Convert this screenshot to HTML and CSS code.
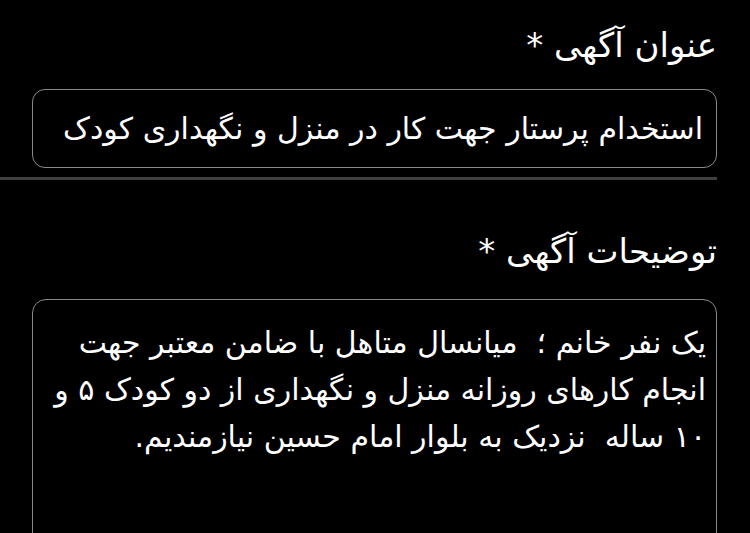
FILE: index.html
```html
<!DOCTYPE html>
<html lang="fa" dir="rtl">
<head>
<meta charset="utf-8">
<link rel="stylesheet" href="styles.css">
</head>
<body>
<div class="page">
  <section class="field">
    <h2 class="label">عنوان آگهی *</h2>
    <div class="input">استخدام پرستار جهت کار در منزل و نگهداری کودک</div>
  </section>
  <div class="divider"></div>
  <section class="field">
    <h2 class="label label-2">توضیحات آگهی *</h2>
    <div class="textarea">یک نفر خانم ؛&nbsp; میانسال متاهل با ضامن معتبر جهت<br>انجام کارهای روزانه منزل و نگهداری از دو کودک ۵ و<br>۱۰ ساله&nbsp; نزدیک به بلوار امام حسین نیازمندیم.</div>
  </section>
</div>
</body>
</html>
```
FILE: styles.css
```css
html, body {
  margin: 0;
  padding: 0;
  background: #000;
  color: #fff;
  font-family: "DejaVu Sans", sans-serif;
  overflow: hidden;
}
.page {
  width: 750px;
  height: 533px;
  display: flex;
  flex-direction: column;
  padding-top: 25px;
  padding-right: 33px;
  box-sizing: border-box;
}
.page > * {
  flex-shrink: 0;
}
.field {
  display: flex;
  flex-direction: column;
  padding-left: 32px;
}
.field > * {
  flex-shrink: 0;
}
.label {
  margin: 0 0 24px 0;
  font-weight: normal;
  font-size: 34px;
  line-height: 40px;
  height: 40px;
  white-space: nowrap;
}
.label-2 {
  margin-top: 51px;
  margin-bottom: 28px;
}
.input {
  height: 79px;
  border: 1.5px solid #8a8a8a;
  border-radius: 13px;
  box-sizing: border-box;
  display: flex;
  align-items: center;
  padding: 0 13px;
  font-size: 30px;
  white-space: nowrap;
}
.divider {
  height: 3px;
  background: #3f3f3f;
  margin-top: 9px;
}
.textarea {
  height: 250px;
  border: 1.5px solid #8a8a8a;
  border-radius: 14px;
  box-sizing: border-box;
  padding: 19px 10px 0 10px;
  font-size: 30px;
  line-height: 47px;
  white-space: nowrap;
}
```
